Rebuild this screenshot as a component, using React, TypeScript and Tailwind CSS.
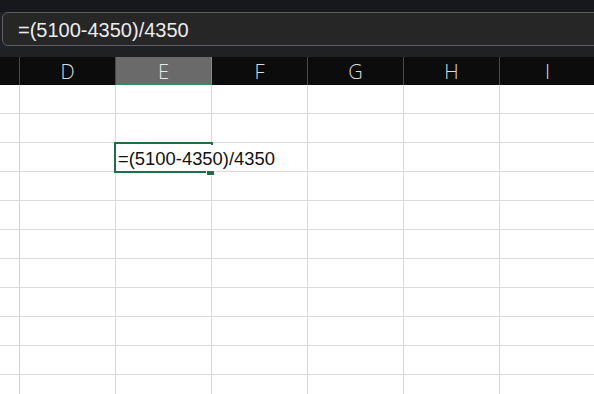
import React from "react";

const cols = ["D", "E", "F", "G", "H", "I"];
const rows = Array.from({ length: 11 }, (_, i) => i);

export default function App() {
  return (
    <div className="relative w-[594px] h-[394px] overflow-hidden bg-white flex flex-col">
      {/* formula bar area */}
      <div className="h-[12px] bg-[#16181c] shrink-0" />
      <div className="h-[45px] bg-[#1f2124] shrink-0 pl-[2px]">
        <div className="h-[34px] w-[640px] rounded-[6px] border border-[#5e5f61] bg-[#262626] flex items-center pl-[15px]">
          <span
            className="text-[20px] leading-[24px] text-[#ececec] pt-[1px]"
            style={{ fontFamily: '"Liberation Sans", Arial, sans-serif' }}
          >
            =(5100-4350)/4350
          </span>
        </div>
      </div>

      {/* column header */}
      <div
        className="h-[28px] shrink-0 flex bg-[#0c0c0c]"
        style={{ fontFamily: '"Open Sans", "Noto Sans", sans-serif' }}
      >
        <div className="w-[20px] shrink-0 border-r border-[#4a4a4a]" />
        {cols.map((c) => (
          <div
            key={c}
            className={
              c === "E"
                ? "w-[96px] shrink-0 border-r border-[#8a8a8a] bg-[#6a6a6a] border-b-2 border-b-[#2f8a60] flex items-center justify-center text-[20px] font-light text-[#e8e8e8] pt-[3px]"
                : "w-[96px] shrink-0 border-r border-[#4a4a4a] flex items-center justify-center text-[20px] font-light text-[#dcdcdc] pt-[1px]"
            }
          >
            {c}
          </div>
        ))}
      </div>

      {/* grid */}
      <div className="flex flex-col">
        {rows.map((r) => (
          <div key={r} className="h-[29px] shrink-0 flex border-b border-[#dadada]">
            <div className="w-[20px] shrink-0 border-r border-[#d2d2d2]" />
            {cols.map((c) => (
              <div key={c} className="w-[96px] shrink-0 border-r border-[#dadada]" />
            ))}
          </div>
        ))}
      </div>

      {/* selection */}
      <div className="absolute left-[114px] top-[142px] w-[99px] h-[31px] border-2 border-[#1f6e47]" />
      <div
        className="absolute left-[116px] top-[145px] h-[26px] bg-white pl-[2px] pr-[6px] text-[18.4px] leading-[26px] text-[#111] whitespace-nowrap pt-[1px]"
        style={{ fontFamily: '"Liberation Sans", Arial, sans-serif' }}
      >
        =(5100-4350)/4350
      </div>
      <div className="absolute left-[206px] top-[170px] w-[9px] h-[6px] bg-[#1f6e47] border border-white" />
    </div>
  );
}
